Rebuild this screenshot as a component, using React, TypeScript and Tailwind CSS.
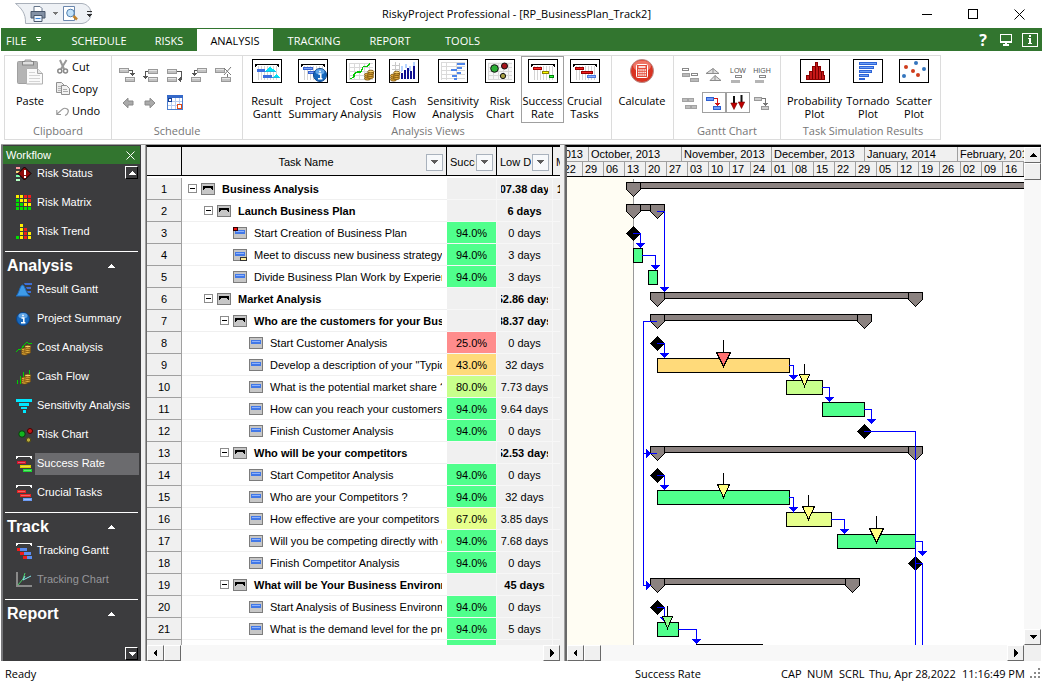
import React from "react";
import clsx from "clsx";

const UI_FONT = "font-['Open_Sans','Noto_Sans',sans-serif]";
const GRID_FONT = "font-['Liberation_Sans',Arial,sans-serif]";

type SvgProps = { children: React.ReactNode; w?: number; h?: number; className?: string; smooth?: boolean };

const Svg = ({ children, w = 16, h = 16, className, smooth }: SvgProps) => (
  <svg
    width={w}
    height={h}
    viewBox={`0 0 ${w} ${h}`}
    className={clsx("shrink-0", className)}
    shapeRendering={smooth ? "auto" : "crispEdges"}
    fill="none"
    aria-hidden="true"
  >
    {children}
  </svg>
);

/* ---------- Ribbon icons ---------- */

const Frame = ({ children }: { children: React.ReactNode }) => (
  <Svg w={30} h={24}>
    <rect x="0.5" y="0.5" width="29" height="23" fill="#fff" stroke="#000" />
    {children}
  </Svg>
);

const GridV = () => <path d="M6.5 7V21M9.5 7V21M12.5 7V21M15.5 7V21M18.5 7V21M21.5 7V21M24.5 7V21" stroke="#d4d4d4" />;
const Hanger = () => <path d="M3 5H27V8H26V7H25V6H5V7H4V8H3Z" fill="#000" />;
const GridXY = () => (
  <path d="M3.5 4V21M8.5 4V21M13.5 4V21M18.5 4V21M23.5 4V21M3 4.5H27M3 8.5H27M3 12.5H27M3 16.5H27M3 20.5H27" stroke="#d9d9d9" />
);
const Coins = ({ x, y }: { x: number; y: number }) => (
  <g transform={`translate(${x} ${y})`} shapeRendering="auto" fill="#e0a93c" stroke="#6e4708" strokeWidth="0.8">
    <ellipse cx="3.5" cy="8.6" rx="3" ry="1.5" />
    <ellipse cx="3.5" cy="6.6" rx="3" ry="1.5" />
    <ellipse cx="3.5" cy="4.6" rx="3" ry="1.5" />
    <ellipse cx="6.5" cy="7" rx="3" ry="1.5" />
    <ellipse cx="6.5" cy="5" rx="3" ry="1.5" />
    <ellipse cx="6.8" cy="3" rx="3" ry="1.5" />
    <ellipse cx="6.8" cy="1.5" rx="3" ry="1.3" fill="#f5cf6b" />
  </g>
);
const InfoBall = ({ cx, cy, r }: { cx: number; cy: number; r: number }) => (
  <g shapeRendering="auto">
    <circle cx={cx} cy={cy} r={r} fill="#1668bd" stroke="#0a4288" />
    <ellipse cx={cx} cy={cy - r / 2} rx={r - 2} ry={r / 2 - 0.5} fill="#5fa4e6" />
    <path d={`M${cx - 1.5} ${cy - 1}H${cx + 0.8}V${cy + 3.5}M${cx - 2} ${cy + 3.7}H${cx + 2.4}M${cx - 0.8} ${cy - 3.5}H${cx + 0.8}`} stroke="#fff" strokeWidth="1.5" />
  </g>
);

const ResultGanttIcon = () => (
  <Frame>
    <GridV />
    <Hanger />
    <path d="M13 12L18 8L24 12ZM20 19L24 15L28 19Z" fill="#00e5f5" />
    <path d="M5 10H13V13H5ZM11 16H20V19H11Z" fill="#3b6fe0" />
    <path d="M13 12H24M20 18H27" stroke="#1fb8e0" />
  </Frame>
);
const ProjectSummaryIcon = () => (
  <Frame>
    <GridV />
    <Hanger />
    <path d="M5.5 8.5H14.5V10.5H5.5ZM10.5 12.5H17V14.5H10.5Z" fill="#7ba0f5" stroke="#3460cf" />
    <InfoBall cx={22} cy={16} r={6.5} />
  </Frame>
);
const CostIcon = () => (
  <Frame>
    <GridXY />
    <path d="M4 20L8 18V15L11 13H15L17 8L19 7L21 8L24 4" stroke="#00c800" strokeWidth="1.2" />
    <Coins x={18} y={11} />
  </Frame>
);
const CashIcon = () => (
  <Frame>
    <path d="M6.5 3V14M10.5 4V12M3 6.5H11M3 10.5H11" stroke="#c8c8c8" />
    <path d="M12 13V7H14V12ZM16 9V5H18V9ZM20 12V7H22V12ZM24 8V3H26V8Z" fill="#b6d4ff" />
    <path d="M12 14H14V20H12ZM15 11H17V20H15ZM18 9H20V20H18ZM21 12H23V20H21ZM24 7H26V20H24Z" fill="#101090" />
    <Coins x={1} y={12} />
  </Frame>
);
const SensitivityIcon = () => (
  <Frame>
    <path d="M3 3.5H27M3 7.5H27M3 11.5H27M3 15.5H27M3 19.5H27M3.5 3V21M8.5 3V21M18.5 3V21" stroke="#dadada" />
    <path d="M19 4H27V6H19ZM19 8H24V10H19ZM13 10H19V12H13ZM19 13H23V15H19ZM14 16H19V18H14ZM16 19H19V21H16Z" fill="#4f86ea" />
  </Frame>
);
const RiskIcon = () => (
  <Frame>
    <rect x="3" y="3" width="24" height="18" fill="#f7f7f7" />
    <GridXY />
    <g shapeRendering="auto" stroke="#111">
      <circle cx="9.5" cy="9.5" r="3.8" fill="#2cae35" />
      <circle cx="19.5" cy="7" r="3" fill="#a5141c" />
      <circle cx="18" cy="17" r="2.6" fill="#a8a044" />
    </g>
  </Frame>
);
const SuccessIcon = () => (
  <Frame>
    <GridV />
    <Hanger />
    <path d="M5.5 8.5H13.5V10.5H5.5Z" fill="#ff3030" stroke="#a00000" />
    <path d="M14.5 12.5H20.5V14.5H14.5Z" fill="#ffff00" stroke="#8c8400" />
    <path d="M21.5 16.5H25.5V18.5H21.5Z" fill="#35ff45" stroke="#00860c" />
  </Frame>
);
const CrucialIcon = () => (
  <Frame>
    <GridV />
    <Hanger />
    <path d="M5.5 8.5H13.5V10.5H5.5ZM11.5 12.5H22.5V14.5H11.5Z" fill="#ef1c1c" stroke="#990000" />
    <path d="M17.5 16.5H25.5V18.5H17.5Z" fill="#8db1fb" stroke="#4976dc" />
  </Frame>
);
const ProbabilityIcon = () => (
  <Frame>
    <path d="M6.5 20.5V16.5H9.5V12.5H12.5V7.5H15.5V3.5H17.5V7.5H20.5V12.5H23.5V16.5H24.5V20.5Z" fill="#c51818" stroke="#8b0000" />
    <path d="M9.5 16V20M12.5 12V20M15.5 8V20M18.5 8V20M21.5 13V20" stroke="#760000" />
  </Frame>
);
const TornadoIcon = () => (
  <Frame>
    <path d="M6.5 3.5H23.5V5.5H6.5ZM6.5 7.5H20.5V9.5H6.5ZM6.5 11.5H18.5V13.5H6.5ZM6.5 15.5H15.5V17.5H6.5ZM6.5 19.5H11.5V20.5H6.5Z" fill="#6ea0f6" stroke="#2e64d6" />
  </Frame>
);
const ScatterIcon = () => (
  <Frame>
    <g shapeRendering="auto">
      <circle cx="17" cy="4" r="2" fill="#3475bd" />
      <circle cx="25" cy="10" r="2" fill="#3475bd" />
      <circle cx="5" cy="17" r="2" fill="#3475bd" />
      <circle cx="7" cy="8" r="2" fill="#cf3d1c" />
      <circle cx="14" cy="12" r="2" fill="#cf3d1c" />
      <circle cx="19" cy="16" r="2" fill="#cf3d1c" />
    </g>
  </Frame>
);
const CalculatorIcon = () => (
  <Svg w={24} h={24} smooth>
    <circle cx="12" cy="12" r="11.5" fill="#d93322" stroke="#b98c88" />
    <ellipse cx="12" cy="7" rx="9" ry="5.5" fill="#ee7465" />
    <rect x="6.5" y="5.5" width="11" height="13" rx="1" fill="#e44837" stroke="#fff" />
    <path d="M8.5 8H15.5" stroke="#fff" strokeWidth="1.6" />
    <path d="M8.2 11H16M8.2 13.5H16M8.2 16H16" stroke="#fff" strokeWidth="1.5" strokeDasharray="1.4 0.7" />
  </Svg>
);
const PasteIcon = () => (
  <Svg w={27} h={26} smooth>
    <rect x="0.5" y="2.5" width="20" height="22" rx="1" fill="#b4b4b4" stroke="#a0a0a0" />
    <rect x="5.5" y="2.5" width="11" height="3.5" fill="#dedede" stroke="#858585" />
    <path d="M8 2.5V1H14V2.5" stroke="#999" fill="#ccc" />
    <path d="M9.5 9.5H20.5L25.5 14.5V25H9.5Z" fill="#fafafa" stroke="#b0b0b0" />
    <path d="M20.5 9.5V14.5H25.5" stroke="#a8a8a8" fill="#e6e6e6" />
    <path d="M12 13.5H18M12 16.5H23M12 19.5H23M12 22.5H23" stroke="#d4d4d4" />
  </Svg>
);
const CutIcon = () => (
  <Svg w={16} h={16} smooth>
    <path d="M5 1L9 10M11.5 1L6 10" stroke="#999" strokeWidth="2" />
    <circle cx="4.8" cy="12" r="2" stroke="#888" strokeWidth="1.5" />
    <circle cx="10.5" cy="12" r="2" stroke="#888" strokeWidth="1.5" />
  </Svg>
);
const CopyIcon = () => (
  <Svg w={16} h={16} smooth>
    <path d="M1.5 1.5H6.5L9.5 4.5V11.5H1.5Z" fill="#ececec" stroke="#909090" />
    <path d="M3 5.5H8M3 7.5H8M3 9.5H8" stroke="#b6b6b6" />
    <path d="M6.5 4.5H11.5L14.5 7.5V13.5H6.5Z" fill="#f3f3f3" stroke="#909090" />
    <path d="M8 8.5H12M8 10.5H13" stroke="#aaa" />
  </Svg>
);
const UndoIcon = () => (
  <Svg w={16} h={16} smooth>
    <path d="M6 11.5H1.8V7M2 11L7.5 6.2C10 4.2 14.5 6 13 9.5C12.5 11 11.5 12 10 12.5" stroke="#979797" strokeWidth="1.1" />
  </Svg>
);

const GrayBar = ({ x, y, w = 9 }: { x: number; y: number; w?: number }) => (
  <g>
    <rect x={x + 0.5} y={y + 0.5} width={w} height="4" fill="#c2c2c2" stroke="#999" />
    <rect x={x + 1} y={y + 1} width={w - 1} height="1" fill="#e4e4e4" />
  </g>
);
const InsertTaskIcon = () => (
  <Svg w={18} h={16}><GrayBar x={0} y={1} /><GrayBar x={6} y={10} /><path d="M10 3.5H13.5V7M11 6.5H16M12 7.5H15M13 8.5H14" stroke="#555" /></Svg>
);
const LinkTasksIcon = () => (
  <Svg w={18} h={16}><GrayBar x={5} y={2} /><GrayBar x={5} y={10} /><path d="M5 4.5H2.5V12M0 9.5H5M1 10.5H4M2 11.5H3" stroke="#555" /></Svg>
);
const UnlinkTasksIcon = () => (
  <Svg w={18} h={16}><GrayBar x={0} y={2} /><GrayBar x={0} y={10} /><path d="M10 4.5H14.5V12.5H11M13.5 10V15M12.5 11V14M11.5 12V13" stroke="#555" /></Svg>
);
const OutdentIcon = () => (
  <Svg w={18} h={16}><GrayBar x={6} y={1} /><GrayBar x={0} y={10} /><path d="M6 3.5H3.5V7M1 6.5H6M2 7.5H5M3 8.5H4" stroke="#555" /></Svg>
);
const DeleteTaskIcon = () => (
  <Svg w={18} h={16}><GrayBar x={0} y={1} /><GrayBar x={6} y={10} /><path d="M9 1L16 8M16 0L9 8" stroke="#777" shapeRendering="auto" /><path d="M12.5 7V10" stroke="#777" /></Svg>
);
const ArrowIcon = ({ right }: { right?: boolean }) => (
  <Svg w={12} h={12} smooth className={right ? "rotate-180" : ""}>
    <path d="M1 6L6 1.2V4H11V8H6V10.8Z" fill="#aaa" stroke="#8a8a8a" />
  </Svg>
);
const CalendarIcon = () => (
  <Svg w={16} h={15}>
    <rect x="0.5" y="0.5" width="15" height="14" fill="#fff" stroke="#4d7fd0" />
    <rect x="0" y="0" width="16" height="3" fill="#3569c9" />
    <path d="M4.5 3V14M8.5 3V14M12.5 3V14M1 6.5H15M1 10.5H15" stroke="#b6cdf2" />
    <rect x="1.5" y="3.5" width="3" height="3" fill="#fff" stroke="#173f94" />
    <rect x="10.5" y="9.5" width="4" height="4" fill="#fff" stroke="#e04a17" />
  </Svg>
);

const BaselineIcon = () => (
  <Svg w={18} h={16}><path d="M1.5 1.5H7.5V3.5H1.5ZM10.5 6.5H16.5V8.5H10.5Z" stroke="#888" /><path d="M1 6H8V9H1ZM9 11H17V14H9Z" fill="#b9b9b9" stroke="#a0a0a0" /></Svg>
);
const TrianglesIcon = () => (
  <Svg w={18} h={16} smooth><path d="M1 6.5L8 1.5L14 6.5ZM8 1.5V6.5M5 13.5L10 8.5L16 13.5ZM10 8.5V13.5" stroke="#8c8c8c" fill="#dedede" /></Svg>
);
const LevelIcon = ({ label }: { label: string }) => (
  <svg width={20} height={18} className="shrink-0" fill="none">
    <text x="10" y="7" textAnchor="middle" fontSize="7" fill="#555" className={GRID_FONT}>{label}</text>
    <g shapeRendering="crispEdges"><rect x="7.5" y="9.5" width="6" height="2" stroke="#888" /><rect x="3" y="14" width="9" height="3" fill="#b5b5b5" /></g>
  </svg>
);
const StackIcon = () => (
  <Svg w={18} h={16}><path d="M1 3H6V6H1ZM7 3H12V6H7ZM4 10H9V13H4ZM10 10H15V13H10Z" fill="#bdbdbd" stroke="#a3a3a3" /></Svg>
);
const LinkArrowIcon = ({ off }: { off?: boolean }) => (
  <Svg w={18} h={16}>
    <rect x="1.5" y="2.5" width="7" height="3" fill={off ? "#ccc" : "#6f9cf7"} stroke={off ? "#999" : "#2d5fd0"} />
    <rect x="8.5" y="11.5" width="7" height="3" fill={off ? "#ccc" : "#6f9cf7"} stroke={off ? "#999" : "#2d5fd0"} />
    <path d="M9 3.5H12.5V9M10 8.5H15M11 9.5H14M12 10.5H13" stroke={off ? "#777" : "#d01515"} />
  </Svg>
);
const RedArrowsIcon = () => (
  <Svg w={16} h={16} smooth><path d="M4 1V9M11.5 0V8" stroke="#111" strokeWidth="2" /><path d="M0.8 8H7.2L4 14.5ZM8.3 7H14.7L11.5 13.5Z" fill="#c00000" stroke="#700000" strokeWidth="0.6" /></Svg>
);

/* ---------- Title bar ---------- */

const QuickAccess = () => (
  <div className="relative ml-[14px] flex h-[22px] w-[115px] items-center pl-[16px]">
    <svg width="78" height="22" className="absolute left-0 top-0" fill="#eef1f5" stroke="#a9b0ba" aria-hidden="true">
      <path d="M1.5 0.5H68C80 2 80 19 68 20.5H11.5C12 10 7 5 1.5 0.5Z" />
    </svg>
    <button aria-label="Print" className="relative">
      <Svg w={16} h={16} smooth>
        <path d="M4 5V0.5H10L12 2.5V5" fill="#fff" stroke="#65758a" />
        <path d="M1 5.5H15V12H1Z" fill="#8391a5" stroke="#48566b" />
        <path d="M4 9.5H12V15.5H4Z" fill="#eef6ff" stroke="#48566b" />
        <path d="M5.5 12.5H10.5" stroke="#3d86d8" />
      </Svg>
    </button>
    <button aria-label="Print options" className="relative ml-[6px]">
      <Svg w={6} h={4}><path d="M0 0H6L3 3Z" fill="#777" /></Svg>
    </button>
    <button aria-label="Print preview" className="relative ml-[5px]">
      <Svg w={16} h={16} smooth>
        <path d="M0.5 0.5H11.5V14.5H0.5Z" fill="#fff" stroke="#6b87ad" />
        <circle cx="7.5" cy="7" r="3.8" fill="#c2e2fa" stroke="#5480ae" />
        <path d="M10.5 10L14 13.5" stroke="#c1822a" strokeWidth="2.5" />
      </Svg>
    </button>
    <button aria-label="Customize toolbar" className="relative ml-[7px]">
      <Svg w={7} h={8}><path d="M1 1.5H6" stroke="#333" /><path d="M1 4H6L3.5 7Z" fill="#333" /></Svg>
    </button>
  </div>
);

const TitleBar = () => (
  <header className="flex h-[28px] shrink-0 items-center pr-px">
    <QuickAccess />
    <h1 className="flex-1 pt-px text-center text-[11px] whitespace-nowrap">RiskyProject Professional - [RP_BusinessPlan_Track2]</h1>
    <div className="flex">
      <button aria-label="Minimize" className="flex h-7 w-[46px] items-center justify-center"><Svg w={10} h={10}><path d="M0 5.5H10" stroke="#000" /></Svg></button>
      <button aria-label="Maximize" className="flex h-7 w-[46px] items-center justify-center"><Svg w={10} h={10}><rect x="0.5" y="0.5" width="9" height="9" stroke="#000" /></Svg></button>
      <button aria-label="Close" className="flex h-7 w-[46px] items-center justify-center"><Svg w={11} h={11} smooth><path d="M0.5 0.5L10.5 10.5M10.5 0.5L0.5 10.5" stroke="#000" /></Svg></button>
    </div>
  </header>
);

/* ---------- Ribbon ---------- */

const TABS = [
  { label: "SCHEDULE", width: "w-[84px]" },
  { label: "RISKS", width: "w-[56px]" },
  { label: "ANALYSIS", width: "w-[76px]", active: true },
  { label: "TRACKING", width: "w-[82px]" },
  { label: "REPORT", width: "w-[70px]" },
  { label: "TOOLS", width: "w-[75px]" },
];

const TabStrip = () => (
  <nav className="mx-px flex h-[23px] shrink-0 items-stretch bg-[#32752f] text-[11px] text-white">
    <button className="flex w-[56px] items-center gap-[9px] pt-[3px] pl-[5px]">
      FILE
      <Svg w={5} h={5} className="-mt-1"><path d="M0 0.5H5" stroke="#fff" /><path d="M0 2H5L2.5 4.5Z" fill="#fff" /></Svg>
    </button>
    {TABS.map((tab) => (
      <button key={tab.label} className={clsx("pt-[3px]", tab.width, tab.active && "mt-px bg-white text-black")}>{tab.label}</button>
    ))}
    <div className="ml-auto flex items-center gap-[13px] pr-[4px]">
      <button aria-label="Help" className="text-base font-bold leading-4">?</button>
      <button aria-label="Display">
        <Svg w={12} h={12}><rect x="0.5" y="0.5" width="11" height="8" stroke="#fff" /><path d="M1 7.5H11" stroke="#fff" /><path d="M6 9V11M3 11H9" stroke="#fff" strokeWidth="2" /></Svg>
      </button>
      <button aria-label="About" className="-ml-[3px] flex h-[14px] w-[16px] items-center justify-center border border-white">
        <Svg w={4} h={9}><path d="M1 0H3V2H1ZM0 3H3V8H4V9H0V8H1V4H0Z" fill="#fff" /></Svg>
      </button>
    </div>
  </nav>
);

const Group = ({ label, className, children }: { label?: string; className: string; children: React.ReactNode }) => (
  <section className={clsx("flex shrink-0 flex-col border-r border-[#dcdcdc]", className)}>
    <div className="flex h-[67px]">{children}</div>
    <div className="text-center text-[11px] leading-[16px] text-[#767676]">{label}</div>
  </section>
);

interface BigButtonProps {
  icon: React.ReactNode;
  lines: string[];
  width: string;
  active?: boolean;
}

const BigButton = ({ icon, lines, width, active }: BigButtonProps) => (
  <button
    className={clsx(
      "flex h-[67px] shrink-0 flex-col items-center border pt-[2px] text-[11px] leading-[13px] whitespace-nowrap",
      width,
      active ? "ml-1 border-[#a0a0a0]" : "border-transparent",
    )}
  >
    <span className="flex h-[35px] items-start">{icon}</span>
    {lines.map((line) => <span key={line}>{line}</span>)}
  </button>
);

const SmallButton = ({ label, width, on, children }: { label: string; width: string; on?: boolean; children: React.ReactNode }) => (
  <button aria-label={label} className={clsx("flex h-[21px] items-center justify-center border", width, on ? "border-[#a0a0a0]" : "border-transparent")}>
    {children}
  </button>
);

const Ribbon = () => (
  <div className="mt-1 mb-1 ml-1 flex h-[85px] shrink-0 self-start border-y border-l border-[#dcdcdc]">
    <Group label="Clipboard" className="w-[107px]">
      <BigButton icon={<PasteIcon />} lines={["Paste"]} width="w-[50px]" />
      <div className="flex flex-col text-[11px]">
        {[["Cut", <CutIcon />], ["Copy", <CopyIcon />], ["Undo", <UndoIcon />]].map(([label, icon]) => (
          <button key={label as string} className="flex h-[22px] items-center gap-px">{icon}{label}</button>
        ))}
      </div>
    </Group>
    <Group label="Schedule" className="w-[131px]">
      <div className="flex flex-col gap-[7px] pt-[8px] pl-[4px]">
        <div className="flex">
          <SmallButton label="Insert task" width="w-[24px]"><InsertTaskIcon /></SmallButton>
          <SmallButton label="Link tasks" width="w-[24px]"><LinkTasksIcon /></SmallButton>
          <SmallButton label="Unlink tasks" width="w-[24px]"><UnlinkTasksIcon /></SmallButton>
          <SmallButton label="Insert summary" width="w-[24px]"><OutdentIcon /></SmallButton>
          <SmallButton label="Delete task" width="w-[24px]"><DeleteTaskIcon /></SmallButton>
        </div>
        <div className="flex">
          <SmallButton label="Outdent" width="w-[24px]"><ArrowIcon /></SmallButton>
          <SmallButton label="Indent" width="w-[20px]"><ArrowIcon right /></SmallButton>
          <SmallButton label="Calendar" width="w-[30px]"><CalendarIcon /></SmallButton>
        </div>
      </div>
    </Group>
    <Group label="Analysis Views" className="w-[369px] pl-[2px]">
      <BigButton icon={<ResultGanttIcon />} lines={["Result", "Gantt"]} width="w-[44px]" />
      <BigButton icon={<ProjectSummaryIcon />} lines={["Project", "Summary"]} width="w-[48px]" />
      <BigButton icon={<CostIcon />} lines={["Cost", "Analysis"]} width="w-[48px]" />
      <BigButton icon={<CashIcon />} lines={["Cash", "Flow"]} width="w-[38px]" />
      <BigButton icon={<SensitivityIcon />} lines={["Sensitivity", "Analysis"]} width="w-[60px]" />
      <BigButton icon={<RiskIcon />} lines={["Risk", "Chart"]} width="w-[34px]" />
      <BigButton icon={<SuccessIcon />} lines={["Success", "Rate"]} width="w-[43px]" active />
      <BigButton icon={<CrucialIcon />} lines={["Crucial", "Tasks"]} width="w-[41px]" />
    </Group>
    <Group className="w-[62px]">
      <BigButton icon={<CalculatorIcon />} lines={["Calculate"]} width="w-[60px]" />
    </Group>
    <Group label="Gantt Chart" className="w-[107px]">
      <div className="grid grid-cols-[24px_24px_24px_24px] content-start gap-y-[7px] pt-[8px] pl-[4px]">
        <SmallButton label="Baseline" width="w-[24px]"><BaselineIcon /></SmallButton>
        <SmallButton label="Distributions" width="w-[24px]"><TrianglesIcon /></SmallButton>
        <SmallButton label="Low results" width="w-[24px]"><LevelIcon label="LOW" /></SmallButton>
        <SmallButton label="High results" width="w-[24px]"><LevelIcon label="HIGH" /></SmallButton>
        <SmallButton label="Split tasks" width="w-[24px]"><StackIcon /></SmallButton>
        <SmallButton label="Show links" width="w-[24px]" on><LinkArrowIcon /></SmallButton>
        <SmallButton label="Show risks" width="w-[24px]" on><RedArrowsIcon /></SmallButton>
        <SmallButton label="Critical links" width="w-[24px]"><LinkArrowIcon off /></SmallButton>
      </div>
    </Group>
    <Group label="Task Simulation Results" className="w-[160px] pl-[5px]">
      <BigButton icon={<ProbabilityIcon />} lines={["Probability", "Plot"]} width="w-[57px]" />
      <BigButton icon={<TornadoIcon />} lines={["Tornado", "Plot"]} width="w-[50px]" />
      <BigButton icon={<ScatterIcon />} lines={["Scatter", "Plot"]} width="w-[42px]" />
    </Group>
  </div>
);

/* ---------- Workflow sidebar ---------- */

const SideHanger = () => <path d="M1 1H17V4H16V3H15V2H3V3H2V4H1Z" fill="#fff" />;

const SideRiskStatus = () => (
  <Svg w={18} h={16}>
    <path d="M1 1H5V3H1Z" fill="#ff9b9b" /><path d="M1 5H5V7H1Z" fill="#ffd27a" /><path d="M1 9H5V11H1Z" fill="#7fffb0" /><path d="M1 13H5V15H1Z" fill="#b6ffc4" />
    <path d="M9.5 1L16 7.5L9.5 14L3 7.5Z" fill="#8e0b0b" stroke="#000" shapeRendering="auto" />
    <path d="M9 4H11V9H9ZM9 10H11V12H9Z" fill="#fff" />
  </Svg>
);
const MATRIX = ["YYRR", "GYYR", "GGYY", "GGGG"];
const CELL_COLORS: Record<string, string> = { Y: "#ffee00", R: "#ee1c1c", G: "#00e000" };
const Cells = ({ rows }: { rows: string[] }) => (
  <Svg w={18} h={16}>
    {rows.flatMap((row, y) =>
      row.split("").map((c, x) => c !== " " && <rect key={`${x}-${y}`} x={1 + x * 4} y={y * 4} width="3" height="3" fill={CELL_COLORS[c]} />),
    )}
  </Svg>
);
const SideResult = () => (
  <Svg w={18} h={16} smooth>
    <path d="M9 1H17V3H10ZM11 5H16V7H12ZM12 9H16V11H13Z" fill="#3d6fd6" />
    <path d="M1 14C4 12 5 3 7.5 3C10 3 11 12 15 14Z" fill="#3e9be9" stroke="#1b6bc0" />
  </Svg>
);
const SideInfo = () => <Svg w={18} h={16} smooth><InfoBall cx={8} cy={8} r={6.5} /></Svg>;
const SideCost = () => <Svg w={18} h={16}><path d="M1 12L4 9H6L10 4L12 2L14 4L17 3" stroke="#00d000" /><Coins x={6} y={5} /></Svg>;
const SideCash = () => <Svg w={18} h={16}><path d="M2.5 11V15M5.5 7V15M8.5 3V15M11.5 6V15M14.5 1V8" stroke="#00d000" /><Coins x={6} y={5} /></Svg>;
const SideSensitivity = () => <Svg w={18} h={16}><path d="M1 1H17V4H1ZM4 5H14V8H4ZM6 9H12V11H6ZM8 12H11V15H8Z" fill="#00e8ff" /></Svg>;
const SideRisk = () => (
  <Svg w={18} h={16} smooth>
    <circle cx="7" cy="7" r="3.2" fill="#12b51e" stroke="#0a3d0c" /><circle cx="15" cy="4" r="2.5" fill="#c41717" stroke="#400" /><circle cx="13.5" cy="13" r="2.2" fill="#b9ab3f" stroke="#4e4712" />
  </Svg>
);
const SideBars = ({ colors }: { colors: string[] }) => (
  <Svg w={18} h={17}>
    <SideHanger />
    <rect x="2" y="6" width="9" height="3" fill={colors[0]} />
    <rect x="5" y="10" width="11" height="3" fill={colors[1]} />
    <rect x="8" y="14" width="9" height="3" fill={colors[2]} />
    <path d="M3 7.5H10M6 11.5H15M9 15.5H16" stroke="#fff" strokeOpacity="0.3" />
  </Svg>
);
const SideTracking = () => (
  <Svg w={18} h={17}>
    <SideHanger />
    <path d="M2 6H5V9H2ZM5 10H9V13H5ZM8 14H12V17H8Z" fill="#ee1c1c" />
    <path d="M5 6H12V9H5ZM9 10H16V13H9ZM12 14H17V17H12Z" fill="#5b8df0" />
  </Svg>
);
const SideTrackingChart = () => (
  <Svg w={18} h={16} smooth>
    <path d="M2 0V14H17" stroke="#8a8a8a" strokeWidth="2" /><path d="M3 13L8 7L10 1" stroke="#4ad06a" /><path d="M8 8L10 4M8 8L16 4" stroke="#7fe9e9" />
  </Svg>
);

type WorkflowItem = { label: string; icon: React.ReactNode; active?: boolean; disabled?: boolean };

const WORKFLOW: { title?: string; items: WorkflowItem[] }[] = [
  {
    items: [
      { label: "Risk Status", icon: <SideRiskStatus /> },
      { label: "Risk Matrix", icon: <Cells rows={MATRIX} /> },
      { label: "Risk Trend", icon: <Cells rows={[" Y  ", " YR ", " YRY", "GYRY"]} /> },
    ],
  },
  {
    title: "Analysis",
    items: [
      { label: "Result Gantt", icon: <SideResult /> },
      { label: "Project Summary", icon: <SideInfo /> },
      { label: "Cost Analysis", icon: <SideCost /> },
      { label: "Cash Flow", icon: <SideCash /> },
      { label: "Sensitivity Analysis", icon: <SideSensitivity /> },
      { label: "Risk Chart", icon: <SideRisk /> },
      { label: "Success Rate", icon: <SideBars colors={["#d3122b", "#d8cf00", "#1ad832"]} />, active: true },
      { label: "Crucial Tasks", icon: <SideBars colors={["#e52525", "#e52525", "#6d9cf5"]} /> },
    ],
  },
  {
    title: "Track",
    items: [
      { label: "Tracking Gantt", icon: <SideTracking /> },
      { label: "Tracking Chart", icon: <SideTrackingChart />, disabled: true },
    ],
  },
  { title: "Report", items: [] },
];

const PanelScroll = ({ down }: { down?: boolean }) => (
  <button
    aria-label={down ? "Scroll down" : "Scroll up"}
    className={clsx("absolute right-[3px] flex h-[13px] w-[13px] items-center justify-center border border-t-white border-l-white border-r-black border-b-black bg-[#3c3c3e]", down ? "bottom-[1px]" : "top-[21px]")}
  >
    <Svg w={8} h={4}><path d={down ? "M0 0H8L4 4Z" : "M0 4L4 0L8 4Z"} fill="#fff" /></Svg>
  </button>
);

const Sidebar = () => (
  <aside className={clsx("relative flex w-[140px] shrink-0 flex-col overflow-hidden border-l-2 border-[#77777a] bg-[#3c3c3e] text-[11px] text-white", GRID_FONT)}>
    <div className="z-10 mt-px mr-px flex h-[18px] shrink-0 items-center justify-between bg-[#32752f] pr-[5px] pl-[3px]">
      <span>Workflow</span>
      <button aria-label="Close workflow"><Svg w={9} h={9} smooth><path d="M0.5 0.5L8.5 8.5M8.5 0.5L0.5 8.5" stroke="#fff" /></Svg></button>
    </div>
    <div className="-mt-[5px] min-h-0 flex-1">
      {WORKFLOW.map((section, i) => (
        <div key={i} className="mb-[5px]">
          {section.title && (
            <h2 className="mr-[3px] ml-[2px] flex h-6 items-center justify-between border-t border-white pt-[4px] pr-[23px] pl-[2px] text-base font-bold">
              {section.title}
              <Svg w={8} h={4}><path d="M0 4L4 0L8 4Z" fill="#fff" /></Svg>
            </h2>
          )}
          {section.items.map((item) => (
            <button key={item.label} disabled={item.disabled} className="flex h-[29px] w-full items-center pl-[12px] text-left">
              {item.icon}
              <span
                className={clsx(
                  "mr-[2px] ml-[2px] flex h-[22px] flex-1 items-center pl-[2px] whitespace-nowrap",
                  item.active && "bg-[#6b6b6e]",
                  item.disabled && "text-[#96969a]",
                )}
              >
                {item.label}
              </span>
            </button>
          ))}
        </div>
      ))}
    </div>
    <PanelScroll />
    <PanelScroll down />
  </aside>
);

/* ---------- Scroll bars ---------- */

const BEVEL = "border border-t-white border-l-white border-r-[#696969] border-b-[#696969] bg-[#f0f0f0]";
const ARROWS = { left: "M5 0V8L1 4Z", right: "M2 0V8L6 4Z", up: "M0 6L4 2L8 6Z", down: "M0 2L4 6L8 2Z" };

const ScrollButton = ({ dir }: { dir: keyof typeof ARROWS }) => (
  <button aria-label={`Scroll ${dir}`} className={clsx("flex h-[16px] w-[17px] shrink-0 items-center justify-center", BEVEL)}>
    <Svg w={8} h={8}><path d={ARROWS[dir]} fill="#000" /></Svg>
  </button>
);

const HScroll = () => (
  <div className="flex h-[16px] shrink-0 bg-[#f8f8f8]">
    <ScrollButton dir="left" />
    <div className={clsx("w-[17px]", BEVEL)} />
    <div className="flex-1" />
    <ScrollButton dir="right" />
  </div>
);

/* ---------- Task table ---------- */

interface Task {
  name: string;
  level: number;
  rate?: number;
  low: string;
  summary?: boolean;
  mark?: "start" | "note";
}

const TASKS: Task[] = [
  { name: "Business Analysis", level: 0, low: "107.38 days", summary: true },
  { name: "Launch Business Plan", level: 1, low: "6 days", summary: true },
  { name: "Start Creation of Business Plan", level: 2, rate: 94, low: "0 days", mark: "start" },
  { name: "Meet to discuss new business strategy", level: 2, rate: 94, low: "3 days", mark: "note" },
  { name: "Divide Business Plan Work by Experience", level: 2, rate: 94, low: "3 days" },
  { name: "Market Analysis", level: 1, low: "52.86 days", summary: true },
  { name: "Who are the customers for your Business", level: 2, low: "38.37 days", summary: true },
  { name: "Start Customer Analysis", level: 3, rate: 25, low: "0 days" },
  { name: "Develop a description of your \"Typical\"", level: 3, rate: 43, low: "32 days" },
  { name: "What is the potential market share ?", level: 3, rate: 80, low: "7.73 days" },
  { name: "How can you reach your customers", level: 3, rate: 94, low: "9.64 days" },
  { name: "Finish Customer Analysis", level: 3, rate: 94, low: "0 days" },
  { name: "Who will be your competitors", level: 2, low: "52.53 days", summary: true },
  { name: "Start Competitor Analysis", level: 3, rate: 94, low: "0 days" },
  { name: "Who are your Competitors ?", level: 3, rate: 94, low: "32 days" },
  { name: "How effective are your competitors", level: 3, rate: 67, low: "3.85 days" },
  { name: "Will you be competing directly with or", level: 3, rate: 94, low: "7.68 days" },
  { name: "Finish Competitor Analysis", level: 3, rate: 94, low: "0 days" },
  { name: "What will be Your Business Environment", level: 2, low: "45 days", summary: true },
  { name: "Start Analysis of Business Environment", level: 3, rate: 94, low: "0 days" },
  { name: "What is the demand level for the product", level: 3, rate: 94, low: "5 days" },
];

const INDENT = ["pl-[6px]", "pl-[22px]", "pl-[38px]", "pl-[54px]"];

const rateColor = (rate?: number) => {
  if (rate === undefined) return "bg-[#f0f0f0]";
  if (rate < 30) return "bg-[#ff8c8c]";
  if (rate < 50) return "bg-[#ffda7a]";
  if (rate < 70) return "bg-[#e6ff8c]";
  if (rate < 90) return "bg-[#c8ff8c]";
  return "bg-[#50ff8c]";
};

const TaskIcon = ({ task }: { task: Task }) => (
  <Svg w={14} h={12}>
    <rect x="0.5" y="0.5" width="13" height="11" fill="#c6c6c6" stroke="#7c7c7c" />
    {task.summary ? (
      <path d="M2 3H12V7H11V6H10V5H4V6H3V7H2Z" fill="#000" />
    ) : (
      <>
        <rect x="2" y="3" width="10" height="4" fill="#4178e8" />
        <rect x="3" y="4" width="8" height="1" fill="#8fb2fa" />
      </>
    )}
    {task.mark === "start" && <rect x="0.5" y="0.5" width="4" height="3" fill="#ee1111" stroke="#300" />}
    {task.mark === "note" && <rect x="7.5" y="8.5" width="6" height="3" fill="#ffef9a" stroke="#333" />}
  </Svg>
);

const FilterButton = ({ label }: { label: string }) => (
  <button aria-label={`Filter ${label}`} className="flex h-[17px] w-[17px] shrink-0 items-center justify-center border border-[#a9b2bd] bg-[#f7f9fb]">
    <Svg w={7} h={4}><path d="M0 0H7L3.5 4Z" fill="#5c5c5c" /></Svg>
  </button>
);

const TaskTable = () => (
  <section className="flex w-[414px] shrink-0 flex-col border-t-2 border-l border-t-black border-l-[#696969] bg-white">
    <div className="min-h-0 flex-1 overflow-hidden">
      <table className={clsx("w-full table-fixed border-separate border-spacing-0 text-[11px] leading-[14px]", GRID_FONT)}>
        <colgroup>
          <col className="w-[35px]" />
          <col className="w-[265px]" />
          <col className="w-[50px]" />
          <col className="w-[56px]" />
          <col />
        </colgroup>
        <thead>
          <tr className="h-[29px] bg-[#f0f0f0]">
            <th className="border-r border-b border-black" aria-label="Row" />
            <th className="border-r border-b border-black p-0 pt-[2px] font-normal">
              <div className="flex items-center pr-[3px]"><span className="flex-1 pl-1 text-center">Task Name</span><FilterButton label="Task Name" /></div>
            </th>
            <th className="border-r border-b border-black p-0 pt-[2px] font-normal">
              <div className="flex items-center gap-px pr-[3px] pl-[3px]"><span className="flex-1 overflow-hidden text-left whitespace-nowrap">Success Rate</span><FilterButton label="Success Rate" /></div>
            </th>
            <th className="border-r border-b border-black p-0 pt-[2px] font-normal">
              <div className="flex items-center gap-px pr-[3px] pl-[3px]"><span className="flex-1 overflow-hidden text-left whitespace-nowrap">Low Duration</span><FilterButton label="Low Duration" /></div>
            </th>
            <th className="overflow-hidden border-b border-black p-0 pt-[2px] pl-[3px] text-left font-normal">M</th>
          </tr>
          <tr className="h-[2px]"><td colSpan={5} className="p-0" /></tr>
        </thead>
        <tbody>
          {TASKS.map((task, i) => (
            <tr key={i} className="h-[22px]">
              <td className="border-r border-b border-[#a0a0a0] bg-[#f0f0f0] p-0 text-center">{i + 1}</td>
              <td className="border-b border-[#f0f0f0] p-0 pr-[5px]">
                <div className={clsx("flex items-center overflow-hidden whitespace-nowrap", INDENT[task.level], task.summary && "font-bold")}>
                  {task.summary ? (
                    <button aria-label="Collapse" className="mr-[4px] shrink-0">
                      <Svg w={9} h={9}><rect x="0.5" y="0.5" width="8" height="8" stroke="#8c8c8c" /><path d="M2 4.5H7" stroke="#000" /></Svg>
                    </button>
                  ) : (
                    <span className="mr-[4px] w-[9px] shrink-0" />
                  )}
                  <TaskIcon task={task} />
                  <span className="pl-[7px]">{task.name}</span>
                </div>
              </td>
              <td className={clsx("border-r border-b border-[#f7f7f7] p-0 text-center", rateColor(task.rate))}>
                {task.rate !== undefined && `${task.rate.toFixed(1)}%`}
              </td>
              <td className="border-r border-b border-[#f7f7f7] bg-[#f0f0f0] p-0">
                <div className={clsx("mr-[4px] ml-[4px] flex justify-center overflow-hidden", task.summary && "font-bold")}>
                  <span className="whitespace-nowrap">{task.low}</span>
                </div>
              </td>
              <td className="overflow-hidden border-b border-[#f7f7f7] bg-[#f0f0f0] p-0 pl-[4px] font-bold">{i === 0 && "1"}</td>
            </tr>
          ))}
          <tr className="h-[22px]">
            <td className="border-r border-[#a0a0a0] bg-[#f0f0f0] p-0" />
            <td />
            <td className="border-r border-[#f7f7f7] bg-[#50ff8c] p-0" />
            <td className="border-r border-[#f7f7f7] bg-[#f0f0f0] p-0" />
            <td className="bg-[#f0f0f0] p-0" />
          </tr>
        </tbody>
      </table>
    </div>
    <HScroll />
  </section>
);

/* ---------- Gantt chart ---------- */

const MONTHS = [
  { label: "2013", width: "w-[21px]", clip: true },
  { label: "October, 2013", width: "w-[93px]" },
  { label: "November, 2013", width: "w-[90px]" },
  { label: "December, 2013", width: "w-[93px]" },
  { label: "January, 2014", width: "w-[93px]" },
  { label: "February, 2014", width: "flex-1" },
];
const WEEKS = ["29", "06", "13", "20", "27", "03", "10", "17", "24", "01", "08", "15", "22", "29", "05", "12", "19", "26", "02", "09", "16"];

const rowMid = (row: number) => 12.5 + (row - 1) * 22;

const SUMMARIES = [
  { row: 1, from: 66, to: 1500 },
  { row: 2, from: 66, to: 90 },
  { row: 6, from: 90, to: 348 },
  { row: 7, from: 90, to: 297 },
  { row: 13, from: 90, to: 348 },
  { row: 19, from: 90, to: 285 },
];
const MILESTONES = [
  { row: 3, x: 66 },
  { row: 8, x: 90 },
  { row: 12, x: 297 },
  { row: 14, x: 90 },
  { row: 18, x: 348 },
  { row: 20, x: 90 },
];
const BARS = [
  { row: 4, from: 66, to: 75, fill: "#50ff8c" },
  { row: 5, from: 81, to: 90, fill: "#50ff8c" },
  { row: 9, from: 90, to: 222, fill: "#ffda7a" },
  { row: 10, from: 219, to: 255, fill: "#c8ff8c" },
  { row: 11, from: 255, to: 297, fill: "#50ff8c" },
  { row: 15, from: 90, to: 222, fill: "#50ff8c" },
  { row: 16, from: 219, to: 264, fill: "#e6ff8c" },
  { row: 17, from: 270, to: 348, fill: "#50ff8c" },
  { row: 21, from: 90, to: 111, fill: "#50ff8c" },
  { row: 22, from: 129, to: 195, fill: "#50ff8c" },
];
const RISK_MARKS = [
  { row: 9, x: 156, size: 7, fill: "#ff7070" },
  { row: 10, x: 237, size: 5, fill: "#ffff80" },
  { row: 15, x: 156, size: 6, fill: "#ffff80" },
  { row: 16, x: 241, size: 6, fill: "#ffff80" },
  { row: 17, x: 309, size: 7, fill: "#ffff80" },
  { row: 21, x: 100, size: 5, fill: "#90ff90" },
];
// links drop from the end of one row to the top of the next
const LINKS = [
  { row: 2, from: 90, x: 97, to: 6 },
  { row: 3, from: 66, x: 73, to: 4 },
  { row: 4, from: 75, x: 88, to: 5 },
  { row: 8, from: 90, x: 97, to: 9 },
  { row: 9, from: 222, x: 226, to: 10 },
  { row: 10, from: 255, x: 262, to: 11 },
  { row: 11, from: 297, x: 304, to: 12 },
  { row: 14, from: 90, x: 97, to: 15 },
  { row: 15, from: 222, x: 226, to: 16 },
  { row: 16, from: 264, x: 277, to: 17 },
  { row: 17, from: 348, x: 355, to: 18 },
  { row: 20, from: 90, x: 97, to: 21 },
  { row: 21, from: 111, x: 129, to: 22 },
];

const capPath = (x: number, y: number) => `M${x - 7} ${y - 7}H${x + 7}V${y}L${x} ${y + 7}L${x - 7} ${y}Z`;

const GanttCanvas = () => (
  <svg className="absolute inset-0 h-full w-full" shapeRendering="crispEdges" fill="none" role="img" aria-label="Gantt chart">
    <rect x="0" y="0" width="66" height="100%" fill="#fffdf3" />
    <line x1="66.5" x2="66.5" y1="2" y2="2000" stroke="#9a9a9a" />
    {SUMMARIES.map(({ row, from, to }) => (
      <g key={row} fill="#8b8280" stroke="#000">
        <rect x={from + 0.5} y={rowMid(row) - 7} width={to - from} height="6" />
        <path d={capPath(from + 0.5, rowMid(row))} />
        <path d={capPath(to + 0.5, rowMid(row))} />
      </g>
    ))}
    {MILESTONES.map(({ row, x }) => (
      <path key={row} d={`M${x + 0.5} ${rowMid(row) - 7.5}l7.5 7.5l-7.5 7.5l-7.5 -7.5Z`} fill="#000" />
    ))}
    {BARS.map(({ row, from, to, fill }) => (
      <rect key={row} x={from + 0.5} y={rowMid(row) - 7} width={to - from} height="14" fill={fill} stroke="#000" />
    ))}
    {LINKS.map(({ row, from, x, to }) => {
      const tip = rowMid(to) - 7;
      return (
        <g key={row}>
          <path d={`M${from} ${rowMid(row)}H${x + 0.5}V${tip - 4}`} stroke="#00f" />
          <path d={`M${x - 4.5} ${tip - 5.5}h10l-5 5.5Z`} fill="#00f" />
        </g>
      );
    })}
    <path d={`M90 ${rowMid(7)}H76.5V${rowMid(19)}H80M76 ${rowMid(13)}H90`} stroke="#00f" />
    <path d={`M79 ${rowMid(13) - 5}v10l5 -5ZM79 ${rowMid(19) - 5}v10l5 -5Z`} fill="#00f" />
    <path d={`M297 ${rowMid(12)}H348.5V2000M348 ${rowMid(18)}H355.5V2000`} stroke="#00f" />
    {RISK_MARKS.map(({ row, x, size, fill }) => {
      const top = rowMid(row) - 13;
      return (
        <g key={row} stroke="#000">
          <path d={`M${x + 0.5} ${top - size - 6}V${top}`} />
          <path d={`M${x + 0.5 - size} ${top}h${size * 2}L${x + 0.5} ${top + size + 7}Z`} fill={fill} />
        </g>
      );
    })}
  </svg>
);

const GanttPane = () => (
  <section className="flex min-w-0 flex-1 flex-col border-t-2 border-l-2 border-t-black border-l-[#696969] bg-white">
    <div className="flex min-h-0 flex-1">
      <div className="flex min-w-0 flex-1 flex-col">
        <div className={clsx("shrink-0 overflow-hidden border-b border-black bg-[#f0f0f0] text-[11px] leading-[14px] whitespace-nowrap", GRID_FONT)}>
          <div className="flex h-[15px] border-b border-[#a0a0a0]">
            {MONTHS.map((month) => (
              <div
                key={month.label}
                className={clsx("flex shrink-0 overflow-hidden", month.width, month.clip ? "justify-end pr-[5px]" : "border-l border-[#a0a0a0] pl-[2px]")}
              >
                {month.label}
              </div>
            ))}
          </div>
          <div className="flex h-[14px]">
            <div className="flex w-[15px] shrink-0 justify-end overflow-hidden pr-[6px]">22</div>
            {WEEKS.map((week, i) => (
              <div key={i} className="w-[21px] shrink-0 border-l border-[#a0a0a0] pl-[2px]">{week}</div>
            ))}
            <div className="border-l border-[#a0a0a0]" />
          </div>
        </div>
        <div className="relative min-h-0 flex-1 overflow-hidden">
          <GanttCanvas />
        </div>
      </div>
      <div className="flex w-[17px] shrink-0 flex-col bg-[#f8f8f8]">
        <ScrollButton dir="up" />
        <div className={clsx("h-[17px]", BEVEL)} />
        <div className="flex-1" />
        <ScrollButton dir="down" />
      </div>
    </div>
    <div className="flex bg-[#f0f0f0]">
      <div className="flex-1"><HScroll /></div>
      <div className="w-[17px]" />
    </div>
  </section>
);

const StatusBar = () => (
  <footer className="flex h-[22px] shrink-0 items-center pt-1 pr-[1px] pl-[5px] text-[11px] whitespace-nowrap">
    <span className="flex-1">Ready</span>
    <span className="w-[146px]">Success Rate</span>
    <span className="w-[26px]">CAP</span>
    <span className="w-[32px]">NUM</span>
    <span className="w-[30px]">SCRL</span>
    <span className="w-[93px]">Thu, Apr 28,2022</span>
    <span className="w-[68px]">11:16:49 PM</span>
    <Svg w={12} h={12}><path d="M8 0H10V2H8ZM4 4H6V6H4ZM8 4H10V6H8ZM0 8H2V10H0ZM4 8H6V10H4ZM8 8H10V10H8Z" fill="#8a8a8a" /></Svg>
  </footer>
);

export default function App() {
  return (
    <div className={clsx("flex h-screen flex-col overflow-hidden bg-white text-black", UI_FONT)}>
      <TitleBar />
      <TabStrip />
      <Ribbon />
      <main className="mr-[2px] ml-px flex min-h-0 flex-1 border-t border-[#a0a0a0] bg-[#f0f0f0]">
        <Sidebar />
        <div className="w-[5px] shrink-0 border-r border-[#a0a0a0]" />
        <TaskTable />
        <div className="w-[5px] shrink-0 border-r border-[#a0a0a0]" />
        <GanttPane />
      </main>
      <StatusBar />
    </div>
  );
}
